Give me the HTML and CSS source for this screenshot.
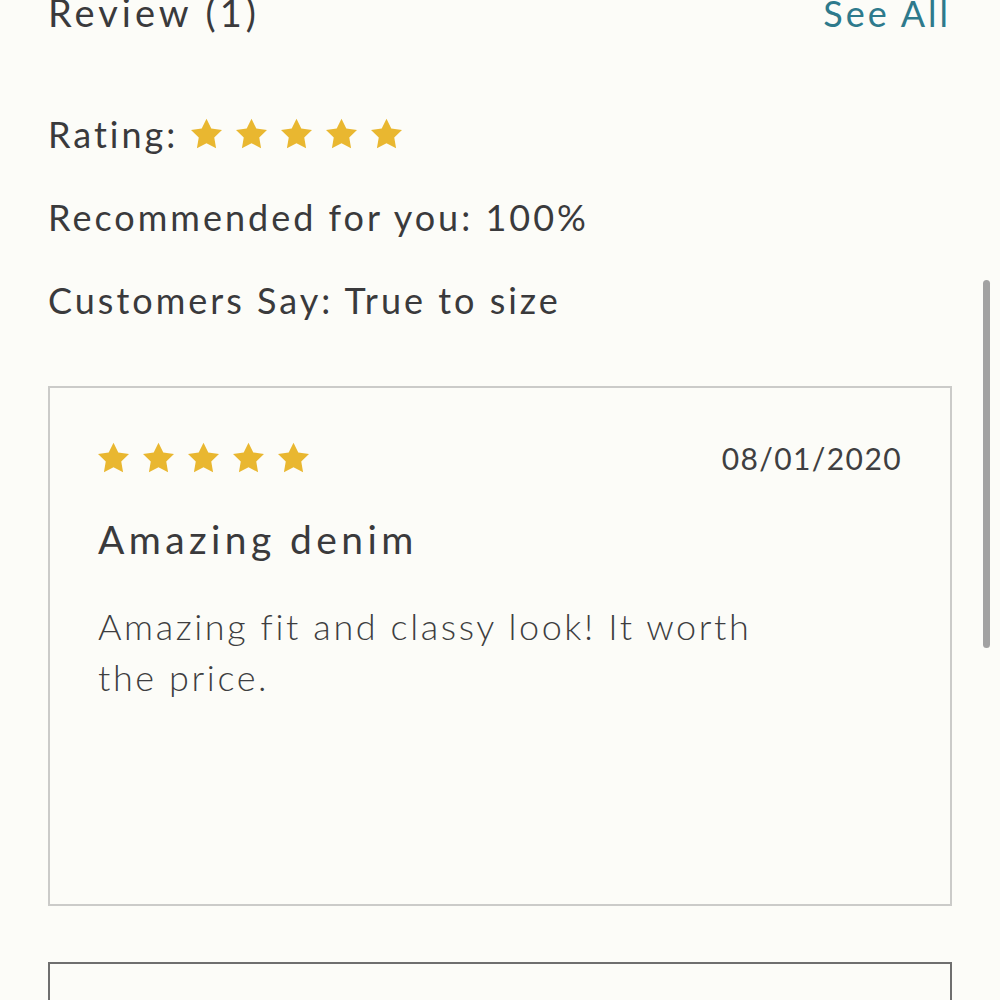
FILE: index.html
```html
<!DOCTYPE html>
<html lang="en">
<head>
    <meta charset="UTF-8">
    <meta name="viewport" content="width=device-width, initial-scale=1.0">
    <title>Reviews</title>
    <link rel="stylesheet" href="styles.css">
</head>
<body>
  <div class="page">
    <div class="header">
      <h2 class="title">Review (1)</h2>
      <a href="#" class="see-all">See All</a>
    </div>

    <div class="summary">
      <div class="summary-row">
        <span>Rating:</span>
        <span class="stars">
          <svg viewBox="2 2 20 19"><polygon points="12,2 15.09,8.26 22,9.27 17,14.14 18.18,21.02 12,17.77 5.82,21.02 7,14.14 2,9.27 8.91,8.26"/></svg>
          <svg viewBox="2 2 20 19"><polygon points="12,2 15.09,8.26 22,9.27 17,14.14 18.18,21.02 12,17.77 5.82,21.02 7,14.14 2,9.27 8.91,8.26"/></svg>
          <svg viewBox="2 2 20 19"><polygon points="12,2 15.09,8.26 22,9.27 17,14.14 18.18,21.02 12,17.77 5.82,21.02 7,14.14 2,9.27 8.91,8.26"/></svg>
          <svg viewBox="2 2 20 19"><polygon points="12,2 15.09,8.26 22,9.27 17,14.14 18.18,21.02 12,17.77 5.82,21.02 7,14.14 2,9.27 8.91,8.26"/></svg>
          <svg viewBox="2 2 20 19"><polygon points="12,2 15.09,8.26 22,9.27 17,14.14 18.18,21.02 12,17.77 5.82,21.02 7,14.14 2,9.27 8.91,8.26"/></svg>
        </span>
      </div>
      <div class="summary-row">Recommended for you: 100%</div>
      <div class="summary-row">Customers Say: True to size</div>
    </div>

    <div class="review-card">
      <div class="review-top">
        <span class="stars">
          <svg viewBox="2 2 20 19"><polygon points="12,2 15.09,8.26 22,9.27 17,14.14 18.18,21.02 12,17.77 5.82,21.02 7,14.14 2,9.27 8.91,8.26"/></svg>
          <svg viewBox="2 2 20 19"><polygon points="12,2 15.09,8.26 22,9.27 17,14.14 18.18,21.02 12,17.77 5.82,21.02 7,14.14 2,9.27 8.91,8.26"/></svg>
          <svg viewBox="2 2 20 19"><polygon points="12,2 15.09,8.26 22,9.27 17,14.14 18.18,21.02 12,17.77 5.82,21.02 7,14.14 2,9.27 8.91,8.26"/></svg>
          <svg viewBox="2 2 20 19"><polygon points="12,2 15.09,8.26 22,9.27 17,14.14 18.18,21.02 12,17.77 5.82,21.02 7,14.14 2,9.27 8.91,8.26"/></svg>
          <svg viewBox="2 2 20 19"><polygon points="12,2 15.09,8.26 22,9.27 17,14.14 18.18,21.02 12,17.77 5.82,21.02 7,14.14 2,9.27 8.91,8.26"/></svg>
        </span>
        <span class="review-date">08/01/2020</span>
      </div>
      <h3 class="review-title">Amazing denim</h3>
      <p class="review-text">Amazing fit and classy look! It worth the price.</p>
    </div>

    <div class="review-card next"></div>
  </div>

  <div class="scrollbar"></div>
</body>
</html>
```

FILE: styles.css
```css
body {
    font-family: Lato, "Noto Sans", sans-serif;
    background-color: #fcfcf8;
    color: #3a3a3c;
    margin: 0;
    overflow: hidden;
}
.page {
    padding: 0 48px;
}
.header {
    display: flex;
    justify-content: space-between;
    align-items: baseline;
    margin-top: -10px;
}
.title {
    margin: 0;
    font-size: 38px;
    font-weight: 400;
    letter-spacing: 4px;
    line-height: 1.2;
}
.see-all {
    color: #2e7a8c;
    text-decoration: none;
    font-size: 36px;
    letter-spacing: 3px;
    margin-right: 1px;
}
.summary {
    margin-top: 77px;
}
.summary-row {
    display: flex;
    align-items: center;
    font-size: 36px;
    letter-spacing: 3px;
    line-height: 42px;
    height: 42px;
    margin-bottom: 41px;
}
.stars {
    display: flex;
    gap: 14px;
}
.summary-row .stars {
    margin-left: 13px;
}
.stars svg {
    width: 31px;
    height: 31px;
    fill: #e9b730;
}
.review-card {
    border: 2px solid #cbcbc9;
    height: 516px;
    padding: 0 48px;
    margin-top: 65px;
}
.review-top {
    display: flex;
    justify-content: space-between;
    align-items: center;
    margin-top: 52px;
}
.review-date {
    font-size: 30px;
    letter-spacing: 1.4px;
    color: #3f3f41;
}
.review-title {
    margin: 40px 0 0;
    font-size: 39px;
    font-weight: 400;
    letter-spacing: 4.4px;
    line-height: 46px;
}
.review-text {
    margin: 39px 0 0;
    max-width: 680px;
    font-size: 36px;
    font-weight: 300;
    letter-spacing: 2.6px;
    line-height: 51px;
    color: #3e3e40;
}
.review-card.next {
    border-color: #6f6f6f;
    margin-top: 56px;
}
.scrollbar {
    position: absolute;
    top: 280px;
    right: 10px;
    width: 7px;
    height: 368px;
    border-radius: 4px;
    background-color: #a2a2a2;
}
```
